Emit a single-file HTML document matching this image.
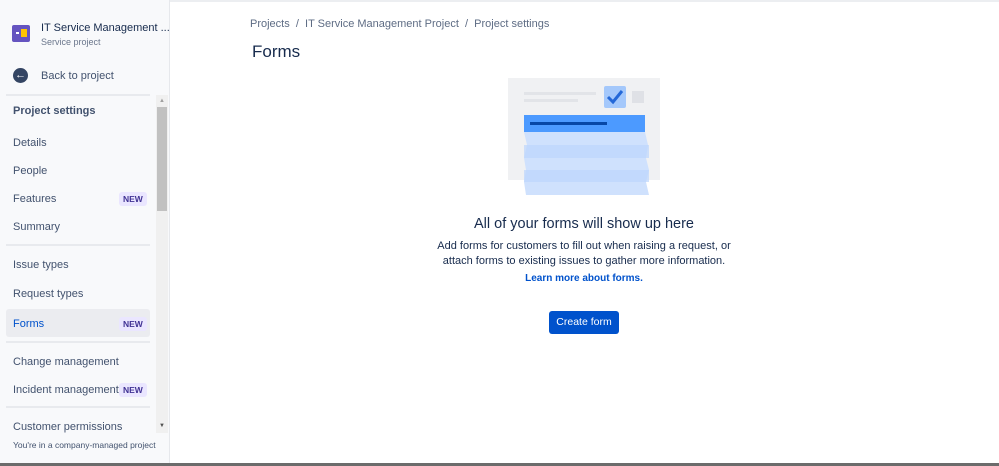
<!DOCTYPE html>
<html><head><style>
*{margin:0;padding:0;box-sizing:border-box}
body{width:999px;height:466px;overflow:hidden;background:#fff;font-family:"Liberation Sans",sans-serif;color:#42526e;position:relative}
.sb{position:absolute;left:0;top:0;width:170px;height:466px;background:#f8f9fb;border-right:1px solid #e6e8ec}
.t{position:absolute;font-size:11px;color:#42526e;white-space:nowrap}
.sep{position:absolute;left:6px;width:144px;height:2px;background:#e8eaee}
.new{position:absolute;font-size:8.5px;font-weight:bold;color:#403294;background:#eae6ff;padding:2px 4px;border-radius:3px;line-height:10px}
</style></head><body>
<div style="position:absolute;left:0;top:0;width:999px;height:2px;background:#eceef1"></div>
<div class="sb">
<div style="position:absolute;left:12px;top:25px;width:18px;height:17px;background:#6554c0;border-radius:2px"></div>
<div style="position:absolute;left:21px;top:29px;width:6px;height:8px;background:#ffc400"></div>
<div style="position:absolute;left:16px;top:32px;width:3px;height:2px;background:#fff"></div>
<div class="t" style="left:41px;top:22px;font-size:11px;color:#172b4d">IT Service Management ...</div>
<div class="t" style="left:41px;top:37px;font-size:9px;color:#6b778c">Service project</div>
<div style="position:absolute;left:13px;top:68px;width:15px;height:15px;border-radius:50%;background:#344563;color:#fff;font-size:11px;line-height:14px;text-align:center;font-weight:bold">←</div>
<div class="t" style="left:41px;top:70px">Back to project</div>
<div class="sep" style="top:94px"></div>
<div style="position:absolute;left:156px;top:95px;width:12px;height:338px;background:#f0f0f0"></div>
<div style="position:absolute;left:157px;top:107px;width:10px;height:104px;background:#c1c1c1"></div>
<div style="position:absolute;left:159px;top:98px;font-size:6px;color:#a0a0a0">▲</div>
<div style="position:absolute;left:159px;top:423px;font-size:6px;color:#505050">▼</div>
<div class="t" style="left:13px;top:105px;font-weight:bold;color:#42526e">Project settings</div>
<div class="t" style="left:13px;top:137px">Details</div>
<div class="t" style="left:13px;top:165px">People</div>
<div class="t" style="left:13px;top:193px">Features</div><div class="new" style="left:119px;top:192px">NEW</div>
<div class="t" style="left:13px;top:221px">Summary</div>
<div class="sep" style="top:244px"></div>
<div class="t" style="left:13px;top:259px">Issue types</div>
<div class="t" style="left:13px;top:288px">Request types</div>
<div style="position:absolute;left:6px;top:309px;width:144px;height:28px;background:#ebecf0;border-radius:3px"></div>
<div class="t" style="left:13px;top:318px;color:#0052cc">Forms</div><div class="new" style="left:119px;top:317px">NEW</div>
<div class="sep" style="top:341px"></div>
<div class="t" style="left:13px;top:356px">Change management</div>
<div class="t" style="left:13px;top:384px">Incident management</div><div class="new" style="left:119px;top:383px">NEW</div>
<div class="sep" style="top:406px"></div>
<div class="t" style="left:13px;top:421px">Customer permissions</div>
<div style="position:absolute;left:0;top:433px;width:169px;height:30px;background:#f8f9fb"></div>
<div class="t" style="left:13px;top:440px;font-size:8.5px">You're in a company-managed project</div>
</div>
<div style="position:absolute;left:0;top:463px;width:999px;height:3px;background:#6b6b6b"></div>
<div class="t" style="left:250px;top:18px;font-size:11px;color:#5e6c84">Projects &nbsp;/&nbsp; IT Service Management Project &nbsp;/&nbsp; Project settings</div>
<div class="t" style="left:252px;top:42px;font-size:17px;color:#172b4d">Forms</div>
<svg style="position:absolute;left:500px;top:70px" width="170" height="130">
<rect x="8" y="8" width="152" height="102" fill="#f0f1f3"/>
<rect x="24" y="22" width="72" height="3" fill="#e2e4e8"/>
<rect x="24" y="29" width="54" height="3" fill="#e2e4e8"/>
<rect x="104" y="16" width="22" height="22" rx="2" fill="#a4c8fb"/>
<path d="M108 27 l5 5 l9 -11" stroke="#2468d8" stroke-width="3" fill="none"/>
<rect x="132" y="21" width="12" height="12" fill="#dfe1e6"/>
<rect x="24" y="45" width="121" height="17" fill="#4c9aff"/>
<rect x="30" y="52" width="77" height="3" fill="#0747a6"/>
<path d="M24 62 L145 62 L148 75 L146 88 L149 100 L146 112 L149 125 L26 125 L24 112 L26 100 L24 88 L27 75 Z" fill="#cfe1fd"/>
<rect x="24" y="75" width="125" height="13" fill="#bcd5fc" opacity=".7"/>
<rect x="24" y="100" width="125" height="12" fill="#bcd5fc" opacity=".7"/>
</svg>
<div style="position:absolute;left:400px;top:216px;width:368px;text-align:center;font-size:14.5px;color:#172b4d">All of your forms will show up here</div>
<div style="position:absolute;left:422px;top:239px;width:324px;text-align:center;font-size:11px;line-height:15px;color:#172b4d">Add forms for customers to fill out when raising a request, or attach forms to existing issues to gather more information.</div>
<div style="position:absolute;left:400px;top:273px;width:368px;text-align:center;font-size:10px;font-weight:bold;color:#0052cc">Learn more about forms.</div>
<div style="position:absolute;left:549px;top:311px;width:70px;height:23px;background:#0052cc;border-radius:3px;color:#fff;font-size:10.5px;line-height:23px;text-align:center">Create form</div>
</body></html>
